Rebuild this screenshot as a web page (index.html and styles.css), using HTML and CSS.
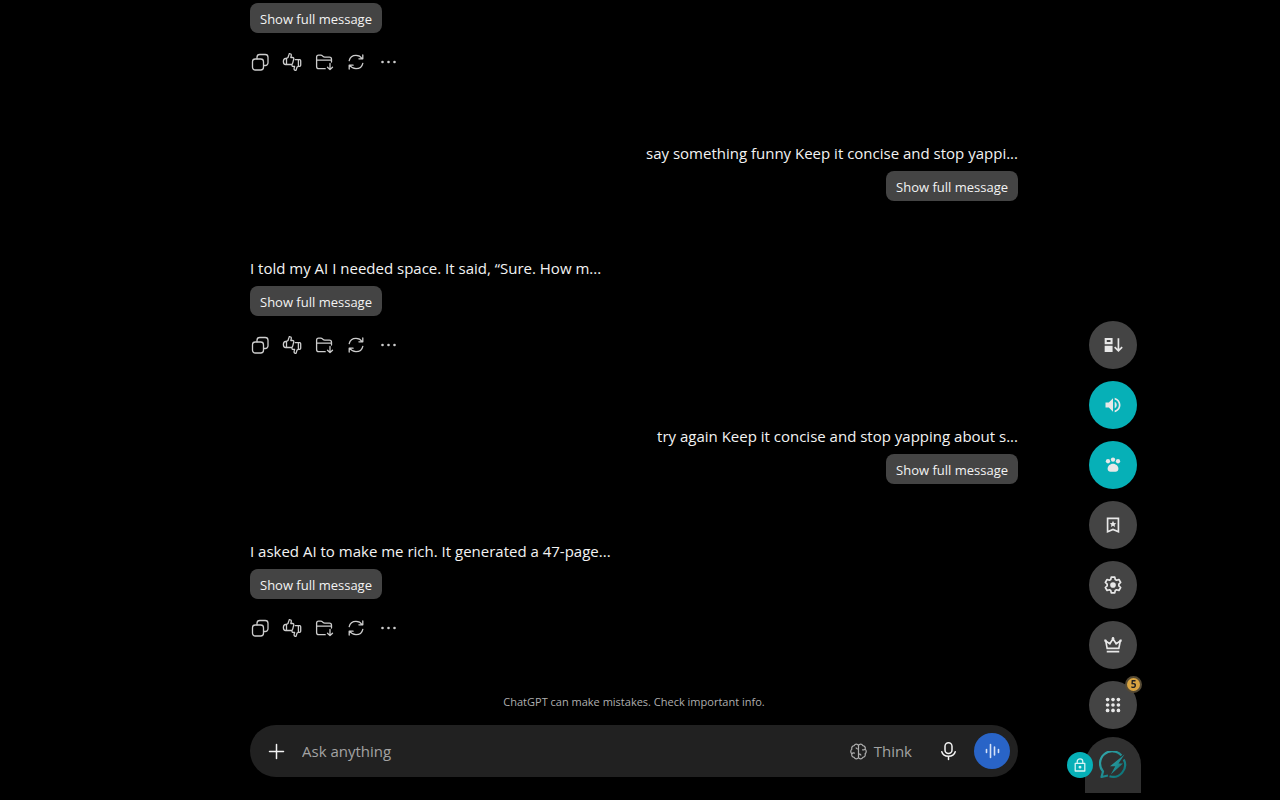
FILE: index.html
```
<!DOCTYPE html>
<html lang="en">
<head>
  <meta charset="UTF-8" />
  <meta name="viewport" content="width=device-width, initial-scale=1.0"/>
  <title>ChatGPT</title>
  <link rel="stylesheet" href="styles.css">
</head>
<body>

  <!-- Shared icons -->
  <svg class="sprite" aria-hidden="true">
    <symbol id="copy" viewBox="0 0 20 20">
      <rect x="2.500" y="7" width="11" height="11" rx="2.800"/>
      <path d="M7 6.800V5.300a2.800 2.800 0 0 1 2.800-2.800h5.400A2.800 2.800 0 0 1 18 5.300v5.400a2.800 2.800 0 0 1-2.800 2.800h-1.500"/>
    </symbol>
    <symbol id="thumbs" viewBox="0 0 20 20">
      <path d="M4.500 6.500 6 5.500l1-3.100c.2-.8.6-1 1.200-.8 1 .3 1.300 1.100 1.100 2L8.800 5.500h1.700c1 0 1.500.7 1.200 1.600l-1 4c-.3 1-.8 1.400-1.800 1.400H4.500M4.500 6.500v6M4.500 6.500h-.9C2.200 6.500 1.500 7.300 1.400 9.400c0 2.100.8 3.100 2.200 3.100h.9"/>
      <path d="M13.200 7.700h4.500c.7 0 1 .4 1 1v4.500c0 .7-.4 1.100-1.200 1.100h-1l-1.500.8-.7 2.500c-.2.800-.6 1-1.200.8-.9-.3-1.200-1.100-1-2l.5-2h-1.400c-.9 0-1.400-.6-1.200-1.400M16.400 7.900v6.300"/>
    </symbol>
    <symbol id="folder" viewBox="0 0 20 20">
      <path d="M11.200 16.700H4.800a2.200 2.200 0 0 1-2.200-2.200V5.200c0-1.400.7-2 2-2h2.200c.7 0 1.200.2 1.700.7l.6.600c.5.500 1 .600 1.700.600h4.600c1.400 0 2.100.8 2.100 2.100v2.800M2.600 8.200h14.900M16 11.500v6M13.500 15.200l2.500 2.400 2.500-2.400"/>
    </symbol>
    <symbol id="refresh" viewBox="0 0 20 20">
      <path d="M3.200 8.700C3.900 5.500 6.600 3.300 10 3.300c2.600 0 4.700 1.200 6 3.200M16.800 2.900v3.900h-3.900M16.800 11.300c-.7 3.200-3.400 5.400-6.800 5.400-2.600 0-4.700-1.200-6-3.200M3.200 17.100v-3.900h3.900"/>
    </symbol>
    <symbol id="more" viewBox="0 0 20 20">
      <g class="solid"><circle cx="4.500" cy="10" r="1.300"/><circle cx="10.500" cy="10" r="1.300"/><circle cx="16.500" cy="10" r="1.300"/></g>
    </symbol>
  </svg>

  <div class="app">
    <main class="thread">
      <div class="message">
        <button class="show-btn">Show full message</button>
        <div class="actions">
          <button aria-label="Copy"><svg class="icon"><use href="#copy"/></svg></button>
          <button aria-label="Rate"><svg class="icon"><use href="#thumbs"/></svg></button>
          <button aria-label="Save to folder"><svg class="icon"><use href="#folder"/></svg></button>
          <button aria-label="Regenerate"><svg class="icon"><use href="#refresh"/></svg></button>
          <button aria-label="More"><svg class="icon"><use href="#more"/></svg></button>
        </div>
      </div>

      <div class="message user">
        <p>say something funny Keep it concise and stop yappi...</p>
        <button class="show-btn">Show full message</button>
      </div>

      <div class="message">
        <p>I told my AI I needed space. It said, “Sure. How m...</p>
        <button class="show-btn">Show full message</button>
        <div class="actions">
          <button aria-label="Copy"><svg class="icon"><use href="#copy"/></svg></button>
          <button aria-label="Rate"><svg class="icon"><use href="#thumbs"/></svg></button>
          <button aria-label="Save to folder"><svg class="icon"><use href="#folder"/></svg></button>
          <button aria-label="Regenerate"><svg class="icon"><use href="#refresh"/></svg></button>
          <button aria-label="More"><svg class="icon"><use href="#more"/></svg></button>
        </div>
      </div>

      <div class="message user">
        <p>try again Keep it concise and stop yapping about s...</p>
        <button class="show-btn">Show full message</button>
      </div>

      <div class="message">
        <p>I asked AI to make me rich. It generated a 47-page...</p>
        <button class="show-btn">Show full message</button>
        <div class="actions">
          <button aria-label="Copy"><svg class="icon"><use href="#copy"/></svg></button>
          <button aria-label="Rate"><svg class="icon"><use href="#thumbs"/></svg></button>
          <button aria-label="Save to folder"><svg class="icon"><use href="#folder"/></svg></button>
          <button aria-label="Regenerate"><svg class="icon"><use href="#refresh"/></svg></button>
          <button aria-label="More"><svg class="icon"><use href="#more"/></svg></button>
        </div>
      </div>
    </main>

    <p class="note">ChatGPT can make mistakes. Check important info.</p>

    <!-- Composer -->
    <form class="composer">
      <button type="button" class="round-btn" aria-label="Add">
        <svg class="icon add" viewBox="0 0 20 20"><path d="M10.500 3.500v14M3.500 10.500h14"/></svg>
      </button>
      <input type="text" placeholder="Ask anything" aria-label="Ask anything">
      <button type="button" class="think-btn">
        <svg class="icon" viewBox="0 0 20 20"><path d="M10 3.600C9 1.800 6.300 1.700 5.500 3.800 3.400 4 2.400 5.700 3 7.500 1.500 8.800 1.500 11.200 3 12.400c-.6 2 .5 3.600 2.500 3.800.8 2.100 3.500 2.100 4.500.2M10 3.600c1-1.800 3.700-1.900 4.500.2 2.100.2 3.100 1.900 2.500 3.700 1.500 1.300 1.500 3.700 0 4.900.6 2-.5 3.600-2.500 3.800-.8 2.100-3.500 2.100-4.500.2M10 3.600v12.800M3 12.400c.7-.8 1.700-1 2.700-.7M17 7.500c-.7.8-1.700 1-2.700.7M10 7.500c-1 0-2-.4-2.500-1.200M10 12.500c1 0 2 .4 2.500 1.200"/></svg>
        Think
      </button>
      <button type="button" class="round-btn" aria-label="Dictate">
        <svg class="icon mic" viewBox="0 0 20 20"><rect x="7" y="1.700" width="7" height="10.800" rx="3.500"/><path d="M3.800 10.700c.8 2.900 3.300 4.500 6.700 4.500s5.900-1.600 6.700-4.500M10.500 15.200v3.300"/></svg>
      </button>
      <button type="button" class="voice-btn" aria-label="Voice mode">
        <svg class="icon" viewBox="0 0 20 20"><path d="M4.500 8.500v3M8.500 3.500v13M12.500 6v8M16.500 8.500v3"/></svg>
      </button>
    </form>
  </div>

  <!-- Floating toolbar -->
  <div class="toolbar">
    <button class="tool" aria-label="Collapse messages">
      <svg viewBox="0 0 24 24"><path fill-rule="evenodd" d="M2 3.500h9.500v7.500H2zM4.500 6v2.500H9V6zM2 13h9.500v7.500H2z"/><path class="line" d="M18.500 4v15M14 14.500l4.500 4.500 4.500-4.500"/></svg>
    </button>
    <button class="tool on" aria-label="Sound">
      <svg viewBox="0 0 24 24"><path d="M3 9v6h4l5 5V4L7 9H3zm13.500 3c0-1.770-1.020-3.290-2.500-4.030v8.050c1.480-.73 2.500-2.250 2.500-4.020zM14 3.230v2.060c2.890.86 5 3.540 5 6.710s-2.110 5.850-5 6.710v2.060c4.010-.91 7-4.490 7-8.770s-2.990-7.860-7-8.770z"/></svg>
    </button>
    <button class="tool on" aria-label="Pet">
      <svg viewBox="0 0 24 24"><circle cx="6" cy="7.500" r="2.600"/><circle cx="12" cy="5.500" r="2.600"/><circle cx="18" cy="7.500" r="2.600"/><path d="M12 10.500c-3.700 0-6.500 3-6.500 6 0 2.300 1.500 3.500 3.500 3.500h6c2 0 3.500-1.200 3.500-3.500 0-3-2.800-6-6.500-6z"/></svg>
    </button>
    <button class="tool" aria-label="Bookmarks">
      <svg viewBox="0 0 24 24"><path class="line" d="M5.500 4h13v16L12 17.300 5.500 20z"/><path d="m12 7 1.200 2.500 2.700.3-2 1.900.6 2.700-2.500-1.400-2.500 1.400.6-2.700-2-1.900 2.700-.3z"/></svg>
    </button>
    <button class="tool" aria-label="Settings">
      <svg viewBox="0 0 24 24"><path class="line thin" d="M9.900 2.500h4.200l.6 2.900 1.600.9 2.800-.9 2.100 3.600-2.200 2v2l2.200 2-2.100 3.600-2.800-.9-1.600.9-.6 2.900H9.900l-.6-2.900-1.600-.9-2.800.9L2.800 15 5 13v-2L2.800 9l2.100-3.600 2.800.9 1.600-.9z"/><circle cx="12" cy="12" r="3.400"/></svg>
    </button>
    <button class="tool" aria-label="Premium">
      <svg viewBox="0 0 24 24"><path class="line" d="M5 16 3.300 7.300l4.900 3.200L12 4.500l3.800 6 4.900-3.200L19 16zM4.500 20h15"/><circle cx="3" cy="6.800" r="1.500"/><circle cx="12" cy="3.800" r="1.500"/><circle cx="21" cy="6.800" r="1.500"/></svg>
    </button>
    <button class="tool" aria-label="Apps, 5 new">
      <svg viewBox="0 0 24 24"><circle cx="5.500" cy="5.500" r="2.200"/><circle cx="12" cy="5.500" r="2.200"/><circle cx="18.500" cy="5.500" r="2.200"/><circle cx="5.500" cy="12" r="2.200"/><circle cx="12" cy="12" r="2.200"/><circle cx="18.500" cy="12" r="2.200"/><circle cx="5.500" cy="18.500" r="2.200"/><circle cx="12" cy="18.500" r="2.200"/><circle cx="18.500" cy="18.500" r="2.200"/></svg>
      <span class="badge">5</span>
    </button>
    <div class="tab">
      <button class="logo-btn" aria-label="Open menu">
        <svg viewBox="0 0 28 28">
          <defs>
            <linearGradient id="teal" x1="0" y1="0" x2="1" y2="1">
              <stop offset="0" stop-color="#35aaad"/>
              <stop offset="1" stop-color="#086f75"/>
            </linearGradient>
          </defs>
          <path fill="none" stroke="url(#teal)" stroke-width="2.200" stroke-linejoin="round" d="M22.500 4.500A12 12 0 0 0 4 20.500L2.500 26l6.500-1.500M24.800 8.500A12 12 0 0 1 10.500 25.300"/>
          <path fill="url(#teal)" d="M25.500 3.500 11 15.200h5.300L11.800 23.500 24 12.600h-4.500z"/>
        </svg>
      </button>
      <button class="lock-btn" aria-label="Lock">
        <svg viewBox="0 0 20 20"><path d="M4 8h12v9.500H4zM6.500 8V5.800a3.500 3.500 0 0 1 7 0V8"/><circle cx="10" cy="12.700" r="1"/></svg>
      </button>
    </div>
  </div>

</body>
</html>
```

FILE: styles.css
```
* {
  box-sizing: border-box;
}

body {
  margin: 0;
  background: #000;
  color: #f3f3f3;
  font-family: 'Segoe UI', 'Open Sans', sans-serif;
  font-size: 15px;
  line-height: 22px;
}

p {
  margin: 0;
}

button {
  padding: 0;
  border: none;
  background: none;
  color: inherit;
  font-family: inherit;
  cursor: pointer;
}

.sprite {
  display: none;
}

.app {
  height: 100vh;
  max-width: 792px;
  margin: 0 auto;
  padding: 0 18px 23px 6px;
  display: flex;
  flex-direction: column;
}

/* Messages */
.thread {
  flex: 1;
  min-height: 0;
  overflow: hidden;
  display: flex;
  flex-direction: column;
  justify-content: flex-end;
  padding-bottom: 50px;
}

.message {
  flex-shrink: 0;
  display: flex;
  flex-direction: column;
  align-items: flex-start;
  gap: 7px;
  margin-bottom: 64px;
}

.message.user {
  align-items: flex-end;
  margin-bottom: 56px;
}

.message:last-child {
  margin-bottom: 0;
}

.show-btn {
  height: 30px;
  padding: 1px 10px 0;
  border-radius: 8px;
  background: #444;
  font-size: 13px;
}

.actions {
  display: flex;
  margin-top: 6px;
}

.actions button {
  width: 32px;
  height: 32px;
  display: flex;
  align-items: center;
  justify-content: center;
}

.actions button:first-child {
  width: 26px;
  padding-right: 6px;
}

.icon {
  width: 20px;
  height: 20px;
  flex-shrink: 0;
  fill: none;
  stroke: #cdcdcd;
  stroke-width: 1.3;
  stroke-linecap: round;
  stroke-linejoin: round;
}

.solid {
  fill: #cdcdcd;
  stroke: none;
}

.note {
  margin-bottom: 15px;
  color: #afafaf;
  font-size: 11px;
  line-height: 16px;
  text-align: center;
}

/* Composer */
.composer {
  height: 52px;
  padding: 8px;
  display: flex;
  align-items: center;
  border-radius: 26px;
  background: #212121;
}

.composer input {
  flex: 1;
  min-width: 0;
  padding: 0 8px;
  border: none;
  outline: none;
  background: none;
  color: #fff;
  font-family: inherit;
  font-size: 15px;
}

.composer input::placeholder {
  color: #a3a3a3;
}

.round-btn,
.voice-btn {
  width: 36px;
  height: 36px;
  display: flex;
  align-items: center;
  justify-content: center;
}

.add,
.mic {
  stroke: #f3f3f3;
  stroke-width: 1.5;
}

.think-btn {
  display: flex;
  align-items: center;
  gap: 6px;
  margin-right: 18px;
  color: #a3a3a3;
  font-size: 15px;
}

.think-btn .icon {
  width: 19px;
  height: 19px;
  stroke: #afafaf;
}

.voice-btn {
  margin-left: 8px;
  border-radius: 50%;
  background: #2964c7;
}

.voice-btn .icon {
  stroke: #d5e2f7;
  stroke-width: 1.6;
}

/* Floating toolbar */
.toolbar {
  position: fixed;
  right: 139px;
  bottom: 7px;
  display: flex;
  flex-direction: column;
  align-items: center;
  gap: 12px;
}

.tool {
  position: relative;
  width: 48px;
  height: 48px;
  display: flex;
  align-items: center;
  justify-content: center;
  border-radius: 50%;
  background: #444;
}

.tool.on {
  background: #06b0b7;
}

.tool svg {
  width: 20px;
  height: 20px;
  fill: #e8e8e8;
}

.tool .line {
  fill: none;
  stroke: #e8e8e8;
  stroke-width: 2;
}

.tool .thin {
  stroke-linejoin: round;
}

.badge {
  position: absolute;
  top: -5px;
  right: -5px;
  width: 17px;
  height: 17px;
  border: 2px solid #554a35;
  border-radius: 50%;
  background: #d9a441;
  color: #222;
  font-size: 10px;
  font-weight: bold;
  line-height: 13px;
  text-align: center;
}

.tab {
  position: relative;
  width: 56px;
  height: 56px;
  margin-top: -4px;
  border-radius: 28px 28px 0 0;
  background: #303030;
}

.logo-btn {
  width: 100%;
  height: 100%;
  display: flex;
  align-items: center;
  justify-content: center;
}

.logo-btn svg {
  width: 28px;
  height: 28px;
}

.lock-btn {
  position: absolute;
  left: -18px;
  top: 15px;
  width: 26px;
  height: 26px;
  display: flex;
  align-items: center;
  justify-content: center;
  border-radius: 50%;
  background: #06b0b7;
}

.lock-btn svg {
  width: 16px;
  height: 16px;
  fill: none;
  stroke: #d8f3f4;
  stroke-width: 1.6;
  stroke-linejoin: round;
}
```
